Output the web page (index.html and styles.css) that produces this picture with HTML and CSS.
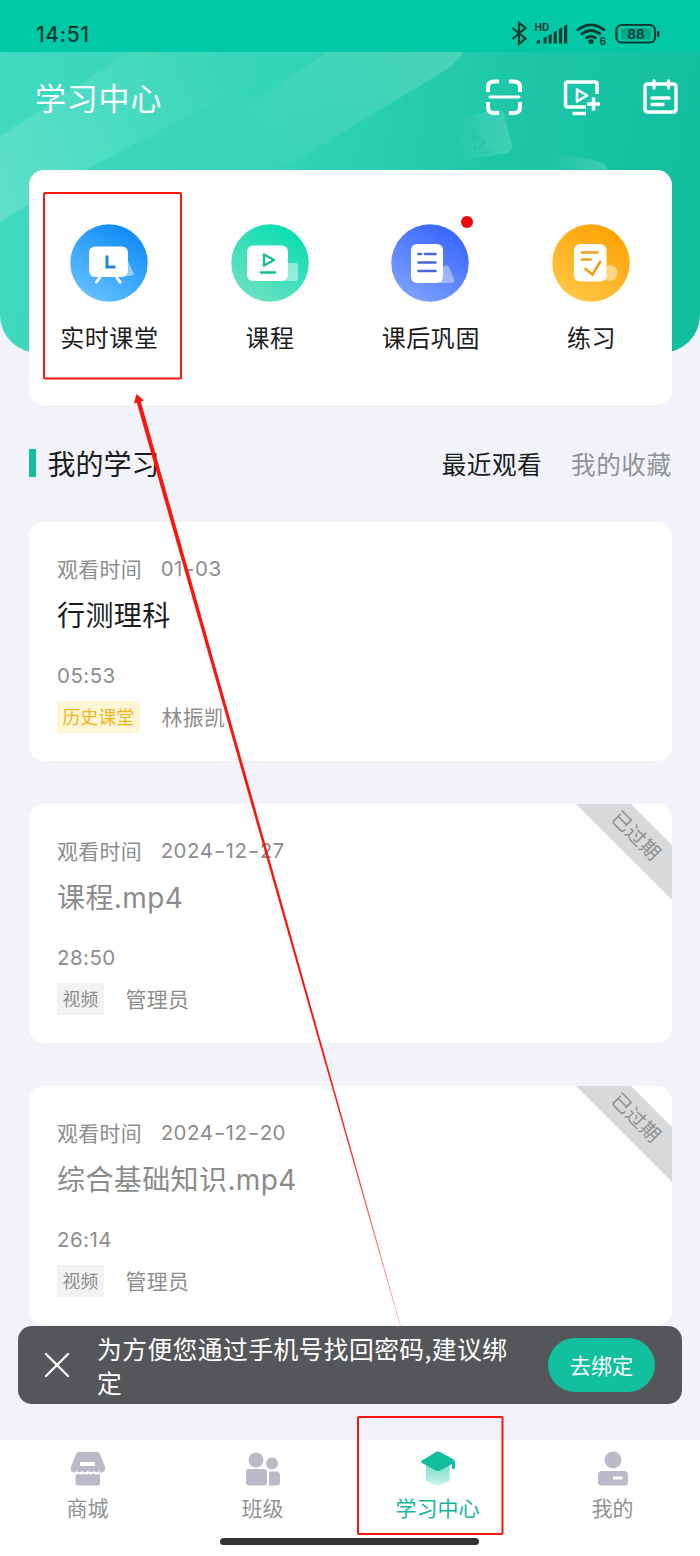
FILE: index.html
```html
<!DOCTYPE html>
<html lang="zh-CN">
<head>
<meta charset="utf-8">
<title>学习中心</title>
<link rel="stylesheet" href="styles.css">
</head>
<body>
<div class="screen">
  <header class="header">
    <svg class="header-art" width="700" height="300" viewBox="0 0 700 300">
      <defs>
        <linearGradient id="band" gradientUnits="userSpaceOnUse" x1="0" y1="160" x2="230" y2="0"><stop offset="0" stop-color="#fff" stop-opacity=".17"/><stop offset="1" stop-color="#fff" stop-opacity="0"/></linearGradient>
        <linearGradient id="band2" gradientUnits="userSpaceOnUse" x1="230" y1="100" x2="440" y2="0"><stop offset="0" stop-color="#fff" stop-opacity="0"/><stop offset="1" stop-color="#fff" stop-opacity=".16"/></linearGradient>
        <linearGradient id="tile" x1="0" y1="0" x2="1" y2="0"><stop offset="0" stop-color="#fff" stop-opacity="0"/><stop offset="1" stop-color="#fff" stop-opacity=".17"/></linearGradient>
      </defs>
      <path d="M0 84 130 0H310L85 118 0 170Z" fill="url(#band)"/>
      <path d="M328 0H463Q457 12 436 24L290 112H160L262 44Z" fill="url(#band2)"/>
      <path d="M454 68 497 57Q502 57 504 63L512 94Q512 99 507 101L464 108Z" fill="url(#tile)"/>
      <path d="m473 83 12 7-10 8zM478 102l14-3" fill="none" stroke="#16b89a" stroke-opacity=".3" stroke-width="2"/>
      <path d="M550 100 590 107Q608 111 607 118H550Z" fill="url(#tile)"/>
    </svg>
    <div class="status">
      <span class="clock">14:51</span>
      <svg class="status-icons" width="150" height="28" viewBox="0 0 150 28">
        <g fill="none" stroke="#073d33" stroke-width="2.200">
          <path d="m2.500 8 13 10.500-6.500 5.500V3l6.500 5L2.500 19"/>
          <path d="M67 10.500Q81 -.500 95 10.500M71 14.500Q81 6.500 91 14.500M75.500 18.500Q81 14 86.500 18.500" stroke-width="2.800"/>
          <rect x="106.500" y="5" width="38.500" height="17.500" rx="5"/>
        </g>
        <rect x="111" y="8" width="30" height="11.500" rx="2" fill="#05a98a"/>
        <g fill="#073d33">
          <path d="M26.500 23.500v-2l3.500-2v4zM33.500 23.500v-5.500l3-1.500v7zM38.500 23.500v-8l3.200-1.500v9.500zM43.700 23.500V12l3.200-1.500v13zM48.900 23.500V9l3.200-1.500v16zM54 23.500V6l3.200-1.500v19z"/>
          <circle cx="81" cy="21.500" r="2.600"/>
          <rect x="147" y="11" width="2.500" height="6" rx="1"/>
        </g>
        <text class="tiny" x="24.500" y="10.500">HD</text>
        <text class="tiny" x="89.500" y="25">6</text>
        <text class="battery" x="126" y="19" text-anchor="middle">88</text>
      </svg>
    </div>
    <div class="titlebar">
      <h1>学习中心</h1>
      <div class="actions">
        <svg width="38" height="38" viewBox="0 0 38 38">
          <g fill="none" stroke="#fff" stroke-width="4"><path d="M4 14V9Q4 3.500 10 3.500h5M25 3.500h5q6 0 6 5.500v5M4 24v5q0 6 6 6h5M25 35h5q6 0 6-6v-5"/><path d="M6 19h29" stroke-linecap="round" stroke-width="3.200"/></g>
        </svg>
        <svg width="38" height="38" viewBox="0 0 38 38">
          <g fill="none" stroke="#fff" stroke-width="3.500"><path d="M34 16V6q0-2-2-2H5Q2.500 4 2.500 6v20.500Q2.500 29 5 29h18"/><path d="M9.500 35.500H23M24 26h13M30.500 19.500v13"/><path d="m14 11.500 10 6-10 6z" stroke-width="2.600" stroke-linejoin="round"/></g>
        </svg>
        <svg width="38" height="38" viewBox="0 0 38 38">
          <g fill="none" stroke="#fff" stroke-width="3.400" stroke-linecap="round"><rect x="3" y="6" width="31" height="28" rx="2.500"/><path d="M12 3v7M26.500 3v7M10 20h17M10 26.500h11"/></g>
        </svg>
      </div>
    </div>
  </header>

  <nav class="menu">
    <a class="menu-item">
      <svg width="78" height="78" viewBox="0 0 78 78">
        <defs><linearGradient id="blue" x1=".2" y1="1" x2=".8" y2="0"><stop stop-color="#67c3fc"/><stop offset="1" stop-color="#0b88f8"/></linearGradient></defs>
        <circle cx="39" cy="39" r="38.700" fill="url(#blue)"/>
        <path d="M57 35 64 50Q63 52 60 52H55Z" fill="#fff" opacity=".45"/>
        <rect x="19" y="22.500" width="39" height="30.500" rx="6" fill="#fff"/>
        <path d="m30 53-3.500 5M46.500 53l3.500 5" stroke="#fff" stroke-width="3" stroke-linecap="round"/>
        <path d="M37 31.500v11.500h8.500" fill="none" stroke="#2388dc" stroke-width="3"/>
      </svg>
      <span>实时课堂</span>
    </a>
    <a class="menu-item">
      <svg width="78" height="78" viewBox="0 0 78 78">
        <defs><linearGradient id="mint" x1=".2" y1="1" x2=".8" y2="0"><stop stop-color="#70e1c4"/><stop offset="1" stop-color="#04ddb0"/></linearGradient></defs>
        <circle cx="39" cy="39" r="38.700" fill="url(#mint)"/>
        <rect x="53" y="39" width="14" height="18" rx="2" fill="#fff" opacity=".45"/>
        <rect x="16" y="21.500" width="41" height="35.500" rx="6" fill="#fff"/>
        <path d="m33 30.500 10 5.500-10 5.500z" fill="none" stroke="#16bd96" stroke-width="2.400" stroke-linejoin="round"/>
        <path d="M30 48.500h14" stroke="#16bd96" stroke-width="2.600" stroke-linecap="round"/>
      </svg>
      <span>课程</span>
    </a>
    <a class="menu-item">
      <svg width="78" height="78" viewBox="0 0 78 78">
        <defs><linearGradient id="indigo" x1=".2" y1="1" x2=".8" y2="0"><stop stop-color="#81a4fc"/><stop offset="1" stop-color="#3362ff"/></linearGradient></defs>
        <circle cx="39" cy="39" r="38.700" fill="url(#indigo)"/>
        <path d="M49 47Q55 38 58 43L63 55Q64 59 60 59H49Z" fill="#fff" opacity=".4"/>
        <rect x="20" y="20" width="32" height="39" rx="6" fill="#fff"/>
        <path d="M27.500 30h2.500M34 30h10.500M27.500 38.500h17M27.500 47h17" stroke="#466bd9" stroke-width="2.600" stroke-linecap="round"/>
      </svg>
      <span>课后巩固</span>
      <i class="dot"></i>
    </a>
    <a class="menu-item">
      <svg width="78" height="78" viewBox="0 0 78 78">
        <defs><linearGradient id="amber" x1=".2" y1="1" x2=".8" y2="0"><stop stop-color="#ffc847"/><stop offset="1" stop-color="#ffa000"/></linearGradient></defs>
        <circle cx="39" cy="39" r="38.700" fill="url(#amber)"/>
        <circle cx="57.500" cy="49" r="8" fill="#fff" opacity=".45"/>
        <rect x="22" y="20" width="32.500" height="37.500" rx="6" fill="#fff"/>
        <path d="M30 28.500h15.500M30 35.500h8.500M33.500 45l7 5.500 7.500-12.500" fill="none" stroke="#eda01b" stroke-width="2.700" stroke-linecap="round"/>
      </svg>
      <span>练习</span>
    </a>
  </nav>

  <main class="content">
    <div class="section-head">
      <h2>我的学习</h2>
      <div class="filters"><span class="current">最近观看</span><span>我的收藏</span></div>
    </div>
    <article class="card">
      <div class="watched"><span>观看时间</span><span class="num">01<b>-</b>03</span></div>
      <h3>行测理科</h3>
      <div class="duration num">05:53</div>
      <div class="meta"><span class="tag live">历史课堂</span><span>林振凯</span></div>
    </article>
    <article class="card expired">
      <div class="watched"><span>观看时间</span><span class="num">2024<b>-</b>12<b>-</b>27</span></div>
      <h3>课程<span class="ext">.mp4</span></h3>
      <div class="duration num">28:50</div>
      <div class="meta"><span class="tag">视频</span><span>管理员</span></div>
      <span class="ribbon">已过期</span>
    </article>
    <article class="card expired">
      <div class="watched"><span>观看时间</span><span class="num">2024<b>-</b>12<b>-</b>20</span></div>
      <h3>综合基础知识<span class="ext">.mp4</span></h3>
      <div class="duration num">26:14</div>
      <div class="meta"><span class="tag">视频</span><span>管理员</span></div>
      <span class="ribbon">已过期</span>
    </article>
  </main>

  <aside class="banner">
    <svg width="26" height="26" viewBox="0 0 26 26"><path d="m2 2 22 22M24 2 2 24" stroke="#fff" stroke-width="2.400" stroke-linecap="round"/></svg>
    <p>为方便您通过手机号找回密码,建议绑定</p>
    <button>去绑定</button>
  </aside>

  <nav class="tabs">
    <a><svg width="36" height="36" viewBox="0 0 36 36" fill="#bbbac9">
      <path d="M9 1h18q2 0 3 2l5 13q.500 5-3 5.500-2 0-3-1.500-2 2.500-5 0-3 2.500-6 0-3 2.500-6 0-3 2.500-5 0-1 1.500-3 1.500-4-.500-3-5.500L6 3q1-2 3-2zM10 11v4h15v-4z" fill-rule="evenodd"/>
      <path d="M5.500 23.500q2 .500 3-1 3 2 5 0 3 2 5 0 3 2 5 0 3 2 6.500 0V32q0 2.500-2.500 2.500H8Q5.500 34.500 5.500 32z"/>
    </svg><span>商城</span></a>
    <a><svg width="36" height="36" viewBox="0 0 36 36" fill="#bbbac9">
      <circle cx="11" cy="9" r="7.500"/><circle cx="27" cy="12.500" r="6"/><rect x="1" y="18" width="21" height="16.500" rx="3"/><path d="M24 20.500h7q4 0 4 4v7q0 3-3 3h-8.500q.500-1 .500-3z"/>
    </svg><span>班级</span></a>
    <a class="active"><svg width="36" height="36" viewBox="0 0 36 36">
      <defs><linearGradient id="cap" x1="0" y1="0" x2="0" y2="1"><stop offset=".3" stop-color="#8fe3cf"/><stop offset="1" stop-color="#c9f3ea"/></linearGradient></defs>
      <path d="M6 12h23.500v17q0 1-1 1.500L20 34q-2 1-4 0l-9-3.500q-1-.5-1-1.500z" fill="url(#cap)"/>
      <path d="M16 1q2-1 4 0l13 7q2 1 2 3v6q0 1-1.500 1T32 17v-4L20 19.500q-2 1-4 0L2 12q-2-1 0-2.500z" fill="#12bd9d"/>
    </svg><span>学习中心</span></a>
    <a><svg width="36" height="36" viewBox="0 0 36 36" fill="#bbbac9">
      <circle cx="18" cy="9" r="8.500"/><path d="M7 20h22q4 0 4 4v7.500q0 3-3 3H6q-3 0-3-3V24q0-4 4-4zM18 25.500v3h9.500v-3z" fill-rule="evenodd"/>
    </svg><span>我的</span></a>
  </nav>

  <div class="home-indicator"></div>

  <svg class="marks" width="700" height="1556" viewBox="0 0 700 1556">
    <defs><linearGradient id="fade" gradientUnits="userSpaceOnUse" x1="0" y1="1050" x2="0" y2="1350"><stop stop-color="#fb150d"/><stop offset=".5" stop-color="#f8150d" stop-opacity=".75"/><stop offset="1" stop-color="#f8150d" stop-opacity=".2"/></linearGradient></defs>
    <g fill="none" stroke="#fb160f" stroke-width="2"><rect x="44" y="193" width="137" height="185.500" rx="1"/><rect x="358" y="1417" width="144.500" height="117" rx="1"/></g>
    <path d="M136.500 394 144 400.500 140.800 401.500 402.800 1333 402 1333 136.800 402.700 134 403.500Z" fill="url(#fade)"/>
  </svg>
</div>
</body>
</html>
```
FILE: styles.css
```css
* { box-sizing: border-box; }
body {
  margin: 0;
  background: #f2f3f8;
  font-family: "Noto Sans CJK SC", sans-serif;
  color: #1b1c1e;
}
h1, h2, h3, p { margin: 0; font-weight: 400; }
svg { display: block; flex: none; }

.screen {
  position: relative;
  width: 700px;
  height: 1556px;
  overflow: hidden;
  display: flex;
  flex-direction: column;
}

.header {
  position: relative;
  flex: none;
  height: 353px;
  border-radius: 0 0 38px 38px;
  background: linear-gradient(100deg, #40dac1 0%, #35d5b9 38%, #1dc6a8 70%, #11bd9f 100%);
  overflow: hidden;
}
.header-art { position: absolute; left: 0; top: 52px; }
.status {
  position: relative;
  height: 52px;
  background: #01c9a6;
  display: flex;
  justify-content: space-between;
  padding: 20px 40px 0 36px;
}
.clock {
  font: 500 21px/29px Inter, sans-serif;
  color: #073d33;
  letter-spacing: .6px;
}
.tiny { font: 700 10px Inter, sans-serif; fill: #073d33; }
.battery { font: 600 13.5px Inter, sans-serif; fill: #073d33; }
.titlebar {
  position: relative;
  display: flex;
  align-items: center;
  justify-content: space-between;
  height: 89px;
  padding: 0 20px 0 35px;
  color: #fff;
}
h1 { font-size: 31px; line-height: 46px; letter-spacing: .8px; }
.actions { display: flex; gap: 41px; }

.menu {
  position: relative;
  flex: none;
  display: grid;
  grid-template-columns: repeat(4, 1fr);
  height: 235px;
  margin: -183px 28.5px 0;
  padding-top: 54px;
  border-radius: 15px;
  background: #fff;
}
.menu-item {
  position: relative;
  display: flex;
  flex-direction: column;
  align-items: center;
  gap: 17px;
  font-size: 24px;
  line-height: 36px;
  letter-spacing: .6px;
}
.menu-item span { padding-left: 1px; }
.dot {
  position: absolute;
  left: 111px;
  top: -8px;
  width: 12px;
  height: 12px;
  border-radius: 50%;
  background: #f3050b;
}

.content {
  display: flex;
  flex-direction: column;
  gap: 43px;
  padding: 0 28.5px;
}
.section-head {
  display: flex;
  justify-content: space-between;
  align-items: center;
  height: 34px;
  margin: 41px 0 -1px;
}
h2 {
  display: flex;
  align-items: center;
  gap: 12px;
  font-size: 28px;
  line-height: 34px;
}
h2::before { content: ""; width: 7px; height: 28px; background: #12bf9f; }
.filters {
  display: flex;
  gap: 29px;
  font-size: 24.6px;
  line-height: 34px;
  letter-spacing: .5px;
  color: #919297;
}
.filters .current { color: #1b1c1e; }

.card {
  position: relative;
  flex: none;
  height: 239px;
  padding: 31px 28.5px 0;
  border-radius: 15px;
  background: #fff;
  overflow: hidden;
  color: #8d8d8d;
  font-size: 20.9px;
  letter-spacing: .4px;
}
.watched { display: flex; gap: 18.5px; line-height: 30px; }
.num { font-family: Inter, sans-serif; font-size: 20.5px; letter-spacing: .45px; }
.watched .num { padding-top: 1px; }
.num b { display: inline-block; font-weight: 400; transform: scaleX(1.25); margin: 0 1.2px; }
h3 {
  height: 40px;
  margin-top: 10px;
  font-size: 28px;
  line-height: 40px;
  letter-spacing: .4px;
  color: #1b1c1e;
}
.ext { font-family: Inter, sans-serif; font-size: 28px; line-height: 1; letter-spacing: .4px; }
.expired h3 { color: #8b8b8b; }
.duration { margin-top: 27px; line-height: 30px; }
.meta { display: flex; gap: 21.5px; margin-top: 10px; line-height: 31px; }
.tag { height: 32px; padding: 0 5.5px; background: #f2f2f2; font-size: 17.8px; letter-spacing: .2px; }
.tag.live { background: #fef5d6; color: #f0b51c; }
.ribbon {
  position: absolute;
  right: -52px;
  top: 12px;
  width: 178px;
  height: 39px;
  background: #d8d9da;
  color: #919191;
  font-size: 19.6px;
  line-height: 36px;
  padding-left: 2px;
  text-align: center;
  transform: rotate(45deg);
}

.banner {
  position: relative;
  flex: none;
  display: flex;
  align-items: center;
  height: 78px;
  margin: 1px 18px 0;
  padding: 0 27px 0 26px;
  border-radius: 14px;
  background: #555659;
  color: #fff;
}
.banner p { width: 424px; margin: -1px 0 0 27px; font-size: 24.8px; line-height: 34px; letter-spacing: .4px; }
.banner button {
  margin-left: auto;
  width: 107px;
  height: 54px;
  padding: 0;
  border: 0;
  border-radius: 27px;
  background: #12bf9f;
  color: #fff;
  font: 400 21.2px/54px "Noto Sans CJK SC", sans-serif;
}

.tabs {
  flex: none;
  display: grid;
  grid-template-columns: repeat(4, 1fr);
  height: 116px;
  margin-top: 36px;
  padding-top: 11px;
  background: #fff;
  color: #929292;
}
.tabs a {
  display: flex;
  flex-direction: column;
  align-items: center;
  gap: 4px;
  font-size: 21px;
  line-height: 32px;
}
.tabs .active { color: #12b899; }
.home-indicator {
  position: absolute;
  left: 220px;
  bottom: 11px;
  width: 259px;
  height: 7px;
  border-radius: 4px;
  background: #313332;
}
.marks { position: absolute; left: 0; top: 0; pointer-events: none; }
```
